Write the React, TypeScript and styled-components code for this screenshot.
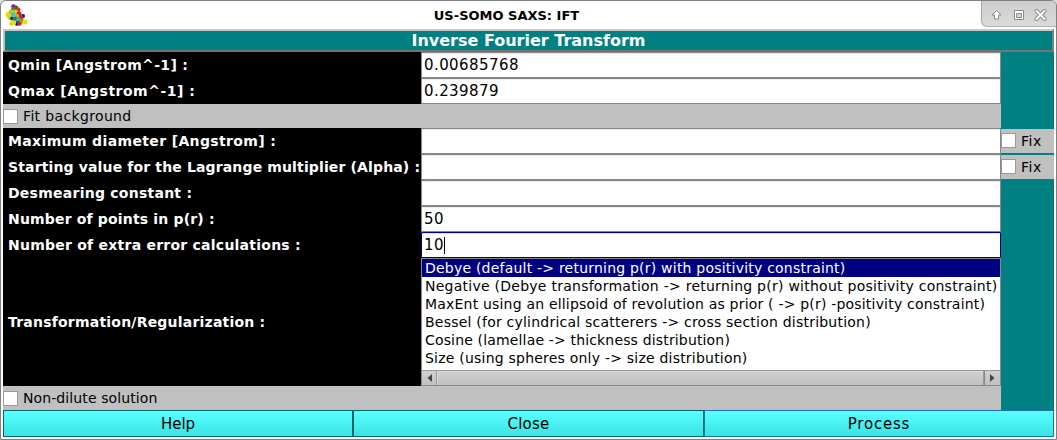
import React from "react";
import styled, { createGlobalStyle } from "styled-components";

const Global = createGlobalStyle`
  * { box-sizing: border-box; }
  body { margin: 0; background: #dcdcdc; }
`;

const Window = styled.main`
  width: 1057px;
  height: 440px;
  padding: 0 2px;
  display: flex;
  flex-direction: column;
  background: #fff;
  border: 1px solid #808080;
  border-radius: 6px 6px 0 0;
  overflow: hidden;
  font-family: "DejaVu Sans", sans-serif;
  font-size: 14px;
  color: #000;
  white-space: nowrap;
`;

const TitleBar = styled.header`
  flex: none;
  height: 28px;
  display: flex;
  align-items: center;
  justify-content: space-between;
`;

const Logo = styled.svg`
  width: 24px;
  height: 24px;
  display: block;
  margin-left: 1px;
`;

const Title = styled.h1`
  flex: 1;
  margin: 0;
  padding: 2px 0 0 4px;
  font-size: 13px;
  line-height: 26px;
  font-weight: bold;
  text-align: center;
`;

const Controls = styled.div`
  width: 75px;
  height: 26px;
  margin: 0 -2px 2px 0;
  background: linear-gradient(#cdcdcd, #dadada);
  border-left: 1px solid #a4a4a4;
  border-bottom: 1px solid #b2b2b2;
  border-bottom-left-radius: 6px;

  svg { display: block; }
`;

const Heading = styled.h2`
  flex: none;
  height: 23px;
  margin: 0;
  border: 2px solid;
  border-color: #c8c8c8 #808080 #747474 #c0c0c0;
  background: #008080;
  color: #fff;
  font-size: 16px;
  line-height: 19px;
  text-align: center;
`;

const Form = styled.div`
  flex: none;
  display: grid;
  grid-template-columns: 418px 580px 53px;
  grid-template-rows: 26px 26px 24px repeat(5, 26px) 128px 24px;
  background: #008080;
`;

const Label = styled.label<{ $ls: number }>`
  grid-column: 1;
  display: flex;
  align-items: center;
  padding: 0 0 1px 5px;
  background: #000;
  color: #fff;
  font-weight: bold;
  letter-spacing: ${(p) => p.$ls}px;
`;

const Field = styled.div<{ $active?: boolean }>`
  display: flex;
  align-items: center;
  padding: 1px 0 0 2px;
  font-size: 15px;
  line-height: 17px;
  letter-spacing: 0.42px;
  background: #fff;
  border: 1px solid ${(p) => (p.$active ? "#000080" : "#888")};
  border-radius: 1px;
  box-shadow: inset 0 1px ${(p) => (p.$active ? "#d8d8ec" : "#ebebeb")};
`;

const Caret = styled.span`
  width: 1px;
  height: 17px;
  background: #000;
`;

const CheckRow = styled.label`
  grid-column: 1 / 3;
  display: flex;
  align-items: center;
  gap: 5px;
  background: #c0c0c0;
`;

const CheckText = styled.span<{ $ls: number }>`
  padding-bottom: 1px;
  letter-spacing: ${(p) => p.$ls}px;
`;

const Fix = styled(CheckRow)`
  grid-column: 3;
  margin: 1px 0;
  padding-bottom: 1px;

  ${CheckText} { padding: 1px 0 0; }
`;

const Box = styled.span`
  width: 15px;
  height: 15px;
  background: #fff;
  border: 1px solid #999;
`;

const List = styled.div`
  display: flex;
  flex-direction: column;
  background: #fff;
  border: 1px solid #888;
`;

const Item = styled.div<{ $selected?: boolean; $ls: number }>`
  height: 18px;
  padding-left: 3px;
  line-height: 18px;
  letter-spacing: ${(p) => p.$ls}px;
  color: ${(p) => (p.$selected ? "#fff" : "#000")};
  background: ${(p) => (p.$selected ? "#000080" : "#fff")};
`;

const ScrollBar = styled.div`
  height: 15px;
  margin-top: auto;
  display: grid;
  grid-template-columns: 14px 1fr 16px;
  border-top: 1px solid #999;
  background: linear-gradient(#d0d0d0, #c0c0c0);

  svg { display: block; }
`;

const Thumb = styled.div`
  border: solid #999;
  border-width: 0 1px;
  box-shadow: inset 1px 1px #d8d8d8;
`;

const Step = styled.div`
  border-left: 1px solid transparent;
`;

const StepRight = styled(Step)`
  border-left-color: #888;
`;

const Buttons = styled.footer`
  flex: none;
  display: grid;
  grid-template-columns: 350px 351px 350px;
  background: #008080;
`;

const Button = styled.button<{ $edge?: string; $ls: number }>`
  height: 27px;
  padding: 0;
  border: 1px solid ${(p) => p.$edge ?? "#066"};
  border-radius: 1px;
  background: linear-gradient(#5affff, #38e4e4);
  color: #000;
  font: 15px "DejaVu Sans", sans-serif;
  letter-spacing: ${(p) => p.$ls}px;
`;

const balls: [number, number, number, string][] = [
  [8.5, 2.5, 2.2, "#a000b0"], [11, 4, 2.5, "#287050"], [8, 5, 2, "#708020"],
  [13, 6, 2.4, "#e03010"], [3, 10.5, 2.6, "#e8e000"], [6, 8, 2.4, "#c8c020"],
  [10.5, 8, 2.5, "#d0c820"], [14, 10, 2.5, "#d81818"], [18, 12, 2, "#1010a0"],
  [8, 10.5, 2.3, "#30c8d0"], [4.5, 13.5, 2.2, "#d8d020"], [7, 14.5, 2, "#183080"],
  [12, 12.5, 2.4, "#c8b020"], [16, 13.5, 2.4, "#e02020"], [10, 15, 2.6, "#208060"],
  [13.5, 16, 2.5, "#30b8c0"], [6.5, 19.5, 2.3, "#e0d800"], [12, 19.5, 2.2, "#1010b0"],
  [14.5, 19.5, 2.3, "#d82010"], [17, 17, 2.3, "#88a020"], [9, 18.5, 2.3, "#e8e000"],
  [20, 18, 2.5, "#e8e000"],
];

const options: [string, number][] = [
  ["Debye (default -> returning p(r) with positivity constraint)", 0.217],
  ["Negative (Debye transformation -> returning p(r) without positivity constraint)", 0.253],
  ["MaxEnt using an ellipsoid of revolution as prior ( -> p(r) -positivity constraint)", 0.195],
  ["Bessel (for cylindrical scatterers -> cross section distribution)", 0.22],
  ["Cosine (lamellae -> thickness distribution)", 0.16],
  ["Size (using spheres only -> size distribution)", 0.217],
];

export default function App() {
  return (
    <>
      <Global />
      <Window>
        <TitleBar>
          <Logo viewBox="0 0 24 24">
            {balls.map(([x, y, r, fill], i) => (
              <circle key={i} cx={x + 1} cy={y + 1} r={r} fill={fill} />
            ))}
          </Logo>
          <Title>US-SOMO SAXS: IFT</Title>
          <Controls>
            <svg width="74" height="25" fill="none">
              <path d="M14.5 9.5 L19 14 H16.5 V18 H12.5 V14 H10 Z" fill="#fff" stroke="#8a8a8a" />
              <path d="M32.5 9.5h9v9h-9z" fill="#fff" stroke="#8a8a8a" />
              <path d="M34.5 12.5h5v4h-5z" fill="#d4d4d4" stroke="#8a8a8a" />
              <path d="M54.5 10 L62.5 18 M62.5 10 L54.5 18" stroke="#8a8a8a" strokeWidth="4" strokeLinecap="round" />
              <path d="M54.5 10 L62.5 18 M62.5 10 L54.5 18" stroke="#fff" strokeWidth="2" strokeLinecap="round" />
            </svg>
          </Controls>
        </TitleBar>
        <Heading>Inverse Fourier Transform</Heading>
        <Form>
          <Label $ls={0.33}>Qmin [Angstrom^-1] :</Label>
          <Field>0.00685768</Field>
          <span />
          <Label $ls={0.5}>Qmax [Angstrom^-1] :</Label>
          <Field>0.239879</Field>
          <CheckRow><Box /><CheckText $ls={0.35}>Fit background</CheckText></CheckRow>
          <Label $ls={0.36}>Maximum diameter [Angstrom] :</Label>
          <Field />
          <Fix><Box /><CheckText $ls={0.5}>Fix</CheckText></Fix>
          <Label $ls={0.14}>Starting value for the Lagrange multiplier (Alpha) :</Label>
          <Field />
          <Fix><Box /><CheckText $ls={0.5}>Fix</CheckText></Fix>
          <Label $ls={0.25}>Desmearing constant :</Label>
          <Field />
          <Label $ls={0.17}>Number of points in p(r) :</Label>
          <Field>50</Field>
          <Label $ls={0.24}>Number of extra error calculations :</Label>
          <Field $active>10<Caret /></Field>
          <Label $ls={0.21}>Transformation/Regularization :</Label>
          <List>
            {options.map(([text, ls], i) => (
              <Item key={text} $selected={i === 0} $ls={ls}>{text}</Item>
            ))}
            <ScrollBar>
              <Step><svg width="13" height="14"><path d="M9 3v8L4.5 7z" fill="#444" /></svg></Step>
              <Thumb />
              <StepRight><svg width="15" height="14"><path d="M5 3v8L9.5 7z" fill="#444" /></svg></StepRight>
            </ScrollBar>
          </List>
          <CheckRow><Box /><CheckText $ls={0.1}>Non-dilute solution</CheckText></CheckRow>
        </Form>
        <Buttons>
          <Button $ls={0}>Help</Button>
          <Button $ls={0.2}>Close</Button>
          <Button $edge="#1c72a0" $ls={0.8}>Process</Button>
        </Buttons>
      </Window>
    </>
  );
}
